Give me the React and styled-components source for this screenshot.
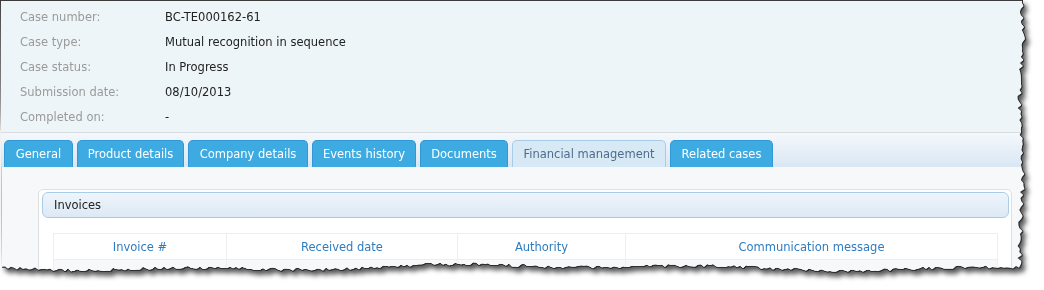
import React from "react";
import styled, { createGlobalStyle } from "styled-components";

const GlobalStyle = createGlobalStyle`
  html, body {
    margin: 0;
    padding: 0;
    background: #ffffff;
  }
  body {
    font-family: "DejaVu Sans", Verdana, sans-serif;
    font-size: 11.5px;
  }
`;

// torn paper outline, seeded so it comes out the same every time
const seeded = seed => () => {
  seed = (seed * 9301 + 49297) % 233280;
  return seed / 233280;
};

const buildTear = () => {
  const rnd = seeded(11);
  const pts = ["0px 0px", "1022px 0px"];
  for (let y = 3; y <= 264; y += 3) {
    const x = 1021 + Math.sin(y / 23) * 1.5 + (rnd() - 0.5) * 5;
    pts.push(`${x.toFixed(1)}px ${y}px`);
  }
  for (let x = 1019; x >= 0; x -= 3) {
    const y =
      267 +
      Math.sin(x / 41) * 1.6 +
      Math.sin(x / 113) * 2 +
      (rnd() - 0.5) * 3.2;
    pts.push(`${x}px ${y.toFixed(1)}px`);
  }
  return `polygon(${pts.join(", ")})`;
};

const TEAR = buildTear();

const Shadow = styled.div`
  width: 1044px;
  height: 290px;
  filter: drop-shadow(1px 0 0 #2f2f2f) drop-shadow(0 1px 0 #2f2f2f)
    drop-shadow(3px 4px 2.5px rgba(0, 0, 0, 0.65));
`;

const Frame = styled.div`
  width: 1030px;
  height: 290px;
  box-sizing: border-box;
  border-top: 1px solid #3c3c3c;
  border-left: 1px solid #3c3c3c;
  background: #f6f8fa;
  overflow: hidden;
`;

const Summary = styled.div`
  background: #eef5f9;
  padding: 3px 0 3px 0;
  border-bottom: 1px solid #d8dcdf;
`;

const InfoRow = styled.div`
  display: flex;
  height: 25px;
  align-items: center;
`;

const Label = styled.span`
  width: 145px;
  padding-left: 19px;
  color: #9a9a9a;
`;

const Value = styled.span`
  color: #222222;
`;

const TabBar = styled.div`
  display: flex;
  gap: 4px;
  align-items: flex-end;
  height: 34px;
  padding-left: 3px;
  background: linear-gradient(#f4f8fb, #d9e7f3);
`;

const Tab = styled.div`
  box-sizing: border-box;
  width: ${({ $width }) => $width}px;
  height: 27px;
  display: flex;
  align-items: center;
  justify-content: center;
  border: 1px solid ${({ $active }) => ($active ? "#a9cbe6" : "#3098d6")};
  border-bottom: none;
  border-radius: 5px 5px 0 0;
  background: ${({ $active }) => ($active ? "#d8e9f6" : "#3eaae2")};
  color: ${({ $active }) => ($active ? "#4e6c8c" : "#ffffff")};
  white-space: nowrap;
`;

const Content = styled.div`
  display: flex;
  padding: 22px 20px 0 37px;
`;

const Panel = styled.div`
  flex: 1;
  height: 120px;
  background: #ffffff;
  border: 1px solid #dddfe1;
  border-radius: 5px;
  padding: 2px 2px 0 3px;
`;

const PanelHeader = styled.div`
  height: 24px;
  display: flex;
  align-items: center;
  padding-left: 11px;
  border: 1px solid #a9cde9;
  border-radius: 6px;
  background: linear-gradient(#eef5fb, #dce9f5);
  color: #222222;
`;

const Table = styled.table`
  margin: 15px 11px 0 11px;
  width: calc(100% - 22px);
  border-collapse: collapse;
  table-layout: fixed;
`;

const Th = styled.th`
  height: 25px;
  padding: 0;
  font-weight: normal;
  color: #2f7cbf;
  text-align: center;
  border: 1px solid #eceef0;
`;

const Td = styled.td`
  height: 24px;
  background: #f7f8fa;
  border: 1px solid #eceef0;
`;

const details = [
  ["Case number:", "BC-TE000162-61"],
  ["Case type:", "Mutual recognition in sequence"],
  ["Case status:", "In Progress"],
  ["Submission date:", "08/10/2013"],
  ["Completed on:", "-"]
];

const tabs = [
  ["General", 69],
  ["Product details", 107],
  ["Company details", 120],
  ["Events history", 104],
  ["Documents", 88],
  ["Financial management", 154, true],
  ["Related cases", 103]
];

const columns = [
  ["Invoice #", 173],
  ["Received date", 231],
  ["Authority", 168],
  ["Communication message", 372]
];

export default function App() {
  return (
    <>
      <GlobalStyle />
      <Shadow>
        <Frame style={{ clipPath: TEAR }}>
          <Summary>
            {details.map(([label, value]) => (
              <InfoRow key={label}>
                <Label>{label}</Label>
                <Value>{value}</Value>
              </InfoRow>
            ))}
          </Summary>
          <TabBar>
            {tabs.map(([name, width, active]) => (
              <Tab key={name} $width={width} $active={active}>
                {name}
              </Tab>
            ))}
          </TabBar>
          <Content>
            <Panel>
              <PanelHeader>Invoices</PanelHeader>
              <Table>
                <colgroup>
                  {columns.map(([name, w]) => (
                    <col key={name} style={{ width: w }} />
                  ))}
                </colgroup>
                <thead>
                  <tr>
                    {columns.map(([name]) => (
                      <Th key={name}>{name}</Th>
                    ))}
                  </tr>
                </thead>
                <tbody>
                  <tr>
                    {columns.map(([name]) => (
                      <Td key={name} />
                    ))}
                  </tr>
                </tbody>
              </Table>
            </Panel>
          </Content>
        </Frame>
      </Shadow>
    </>
  );
}
